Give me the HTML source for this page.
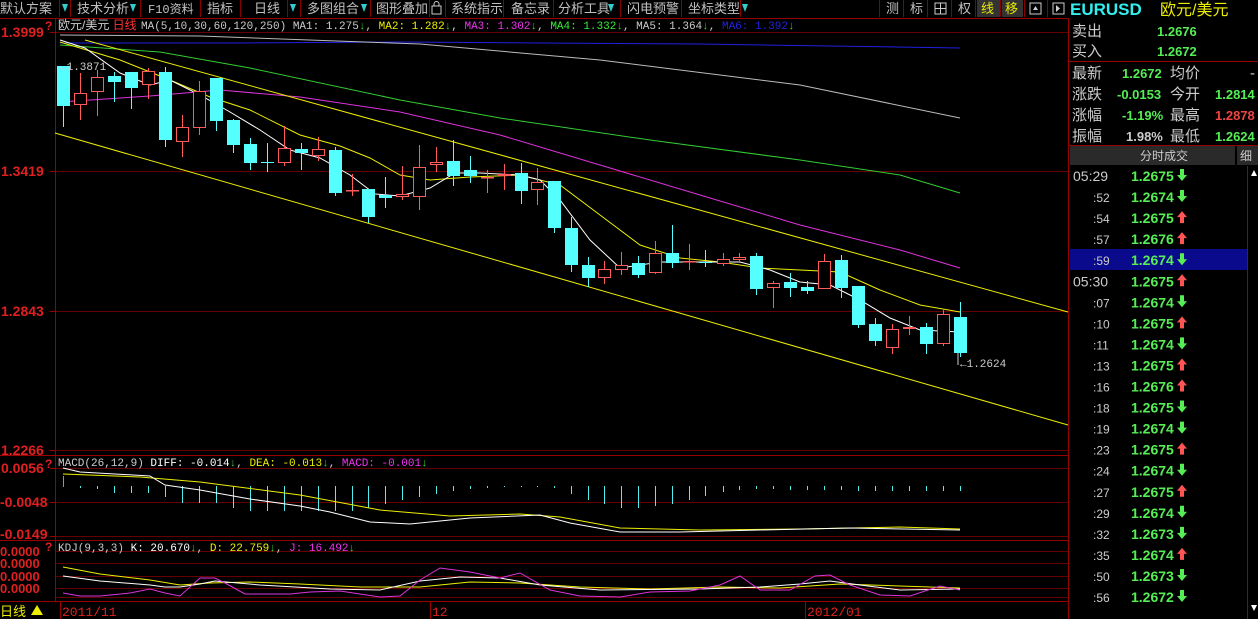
<!DOCTYPE html>
<html><head><meta charset="utf-8"><style>
html,body{margin:0;padding:0;background:#000;width:1258px;height:619px;overflow:hidden}
svg{display:block}
text{font-family:"Liberation Sans","Noto Sans CJK SC",sans-serif}
.m{font-family:"Liberation Mono","Noto Sans CJK SC",monospace}
</style></head><body>
<svg id="s" width="1258" height="619" xmlns="http://www.w3.org/2000/svg">
<rect width="1258" height="619" fill="#000"/>
<!-- toolbar -->
<g fill="#c0c0c0" font-size="13">
<text x="0" y="13">默认方案</text>
<text x="77" y="13">技术分析</text>
<text x="148" y="13" class="m" font-size="12">F10资料</text>
<text x="207" y="13">指标</text>
<text x="254" y="13">日线</text>
<text x="307" y="13">多图组合</text>
<text x="376" y="13">图形叠加</text>
<text x="451" y="13">系统指示</text>
<text x="511" y="13">备忘录</text>
<text x="558" y="13">分析工具</text>
<text x="627" y="13">闪电预警</text>
<text x="688" y="13">坐标类型</text>
<text x="886" y="13">测</text><text x="910" y="13">标</text><text x="958" y="13">权</text>
</g>
<rect x="977" y="0" width="23" height="17" fill="#333"/><rect x="1002" y="0" width="21" height="17" fill="#333"/>
<text x="981" y="13" font-size="13" fill="#e8e800">线</text><text x="1005" y="13" font-size="13" fill="#e8e800">移</text>
<rect x="935" y="3" width="11" height="11" fill="none" stroke="#ccc"/><path d="M940.5 3v11M935 8.5h11" stroke="#ccc"/>
<rect x="1030" y="3" width="11" height="11" fill="none" stroke="#ccc"/><path d="M1033 10l2.5-4 2.5 4z" fill="#ccc"/>
<rect x="1053" y="3" width="11" height="11" fill="none" stroke="#ccc"/><path d="M1056 5v7l4-3.5z" fill="#ccc"/>
<rect x="432" y="6" width="9" height="8" fill="none" stroke="#ccc"/><path d="M434 6v-2a2.5 2.5 0 0 1 5 0v2" fill="none" stroke="#ccc"/>
<g fill="#3cc">
<path d="M62 4h6l-3 8z"/><path d="M130 4h6l-3 8z"/><path d="M290 4h6l-3 8z"/><path d="M361 4h6l-3 8z"/><path d="M608 4h6l-3 8z"/><path d="M742 4h6l-3 8z"/>
</g>
<g stroke="#800" stroke-width="1">
<path d="M59.5 0v17M70.5 0v17M140.5 0v17M200.5 0v17M240.5 0v17M287.5 0v17M300.5 0v17M370.5 0v17M429.5 0v17M445.5 0v17M503.5 0v17M553.5 0v17M620.5 0v17M681.5 0v17M740.5 0v17M879.5 0v17M903.5 0v17M927.5 0v17M951.5 0v17M975.5 0v17M1000.5 0v17M1024.5 0v17M1047.5 0v17"/>
</g>
<text x="1070" y="15" font-size="17" font-weight="bold" fill="#3ee" font-family="Liberation Serif,serif">EURUSD</text>
<text x="1160" y="15" font-size="16" fill="#ee0">欧元/美元</text>
<!-- frame lines -->
<g stroke="#900" fill="none">
<path d="M0 18.5h1068M55.5 18v583M1068.5 18v601M0 455.5h1068M0 540.5h1068M0 601.5h1068"/>
<path d="M56 32.5h1012M56 171.5h1012M56 311.5h1012M56 450.5h1012" stroke="#600"/>
<path d="M56 468.5h1012M56 502.5h1012M56 536.5h1012" stroke="#600"/>
<path d="M56 551.5h1012M56 563.5h1012M56 576.5h1012M56 588.5h1012M56 597.5h1012" stroke="#600"/>
<path d="M50 32.5h5M50 171.5h5M50 311.5h5M50 450.5h5M50 468.5h5M50 502.5h5M50 536.5h5"/>
</g>
<!-- axis labels -->
<g fill="#e02020" font-size="14" class="m" font-weight="bold">
<text x="1" y="37">1.3999</text><text x="1" y="176">1.3419</text><text x="1" y="316">1.2843</text><text x="1" y="455">1.2266</text>
<text x="1" y="473">0.0056</text><text x="0" y="507">-0.0048</text><text x="0" y="539">-0.0149</text>
<text x="0" y="556" font-size="13">0.0000</text><text x="0" y="568" font-size="13">0.0000</text><text x="0" y="581" font-size="13">0.0000</text><text x="0" y="593" font-size="13">0.0000</text>
</g>
<text x="45" y="30" fill="#e02020" font-size="12" font-weight="bold">?</text>
<text x="45" y="468" fill="#e02020" font-size="12" font-weight="bold">?</text>
<text x="45" y="551" fill="#e02020" font-size="12" font-weight="bold">?</text>
<!-- header line -->
<text x="58" y="29" font-size="12" fill="#ccc">欧元/美元 <tspan fill="#f33">日线</tspan></text>
<text x="141" y="29" font-size="11" class="m" fill="#ccc" xml:space="preserve">MA(5,10,30,60,120,250) MA1: 1.275<tspan fill="#3c3">↓</tspan>, <tspan fill="#ee0">MA2: 1.282</tspan><tspan fill="#3c3">↓</tspan>, <tspan fill="#e3e">MA3: 1.302</tspan><tspan fill="#3c3">↓</tspan>, <tspan fill="#3e3">MA4: 1.332</tspan><tspan fill="#3c3">↓</tspan>, MA5: 1.364<tspan fill="#3c3">↓</tspan>, <tspan fill="#22d">MA6: 1.392</tspan><tspan fill="#3c3">↓</tspan></text>
<!-- MA lines -->
<g fill="none" stroke-width="1">
<polyline stroke="#2020e0" points="60,43 230,43 400,42 700,44 960,48"/>
<polyline stroke="#bbb" points="60,35 200,36 420,44 600,60 800,85 960,118"/>
<polyline stroke="#3c3" points="60,45 160,52 250,68 400,100 500,118 650,140 800,160 900,175 960,193"/>
<polyline stroke="#d3d" points="60,102 150,96 220,90 300,97 400,112 500,135 600,165 700,195 800,225 900,250 960,268"/>
<polyline stroke="#ee0" points="60,42 120,60 170,80 210,97 250,110 300,135 340,146 370,158 400,175 430,180 470,177 520,175 560,185 600,215 640,245 680,258 720,262 760,268 800,270 840,272 880,290 920,305 960,312"/>
<polyline stroke="#fff" points="60,40 85,48 120,73 150,85 170,80 200,95 230,112 260,130 290,150 320,158 350,175 375,194 400,196 430,188 455,173 480,173 520,175 540,180 560,200 590,240 620,268 660,262 700,262 740,262 770,270 800,282 830,285 860,300 890,318 920,330 960,332"/>
<path stroke="#ee0" d="M85 40L1068 312M55 133L1068 425"/>
</g>
<g id="candles"></g>
<text x="60" y="70" font-size="11" class="m" fill="#ccc">←1.3871</text>
<text x="960" y="367" font-size="11" class="m" fill="#ccc">←1.2624</text>
<path d="M958 353v12" stroke="#ccc"/>
<!-- MACD -->
<text x="58" y="466" font-size="11" class="m" fill="#ccc" xml:space="preserve">MACD(26,12,9) <tspan fill="#fff">DIFF: -0.014</tspan><tspan fill="#3c3">↓</tspan>, <tspan fill="#ee0">DEA: -0.013</tspan><tspan fill="#3c3">↓</tspan>, <tspan fill="#e3e">MACD: -0.001</tspan><tspan fill="#3c3">↓</tspan></text>
<g id="macd" stroke="#5ee"></g>
<polyline fill="none" stroke="#ee0" points="63,474 140,477 200,482 300,495 380,510 450,516 520,514 560,517 620,528 700,530 800,529 900,527 960,529"/>
<polyline fill="none" stroke="#fff" points="63,468 80,472 150,476 165,485 200,490 250,499 300,506 330,512 370,522 410,524 470,518 540,515 570,523 620,532 680,532 760,530 850,528 960,530"/>
<!-- KDJ -->
<text x="58" y="551" font-size="11" class="m" fill="#ccc" xml:space="preserve">KDJ(9,3,3) <tspan fill="#fff">K: 20.670</tspan><tspan fill="#3c3">↓</tspan>, <tspan fill="#ee0">D: 22.759</tspan><tspan fill="#3c3">↓</tspan>, <tspan fill="#e3e">J: 16.492</tspan><tspan fill="#3c3">↓</tspan></text>
<polyline fill="none" stroke="#ee0" points="63,567 100,574 150,580 180,585 210,583 250,582 300,584 360,587 420,587 470,582 520,583 580,587 650,589 720,587 780,588 840,584 900,586 960,588"/>
<polyline fill="none" stroke="#fff" points="63,576 100,581 150,585 165,587 180,587 200,584 215,581 260,585 330,589 380,590 420,581 460,577 500,578 540,585 600,590 700,589 760,587 800,584 830,581 860,585 900,590 960,589"/>
<polyline fill="none" stroke="#d3d" points="63,593 80,596 100,596 130,593 150,589 165,593 180,596 200,578 215,578 225,583 245,594 290,594 310,592 340,591 380,597 400,596 420,580 440,568 470,572 500,578 520,573 550,590 580,596 620,597 650,592 690,591 720,585 740,576 760,590 790,590 815,576 830,575 850,585 880,595 910,596 940,586 960,590"/>
<!-- bottom -->
<text x="0" y="616" font-size="13" fill="#ee0">日线</text>
<path d="M31 615l6-10 6 10z" fill="#ee0"/>
<text x="62" y="616" font-size="13" class="m" fill="#e02020">2011/11</text>
<text x="432" y="616" font-size="13" class="m" fill="#e02020">12</text>
<text x="807" y="616" font-size="13" class="m" fill="#e02020">2012/01</text>
<path d="M60.5 602v17M430.5 602v17M805.5 602v17" stroke="#900"/>
<!-- right panel -->
<g font-size="15">
<text x="1072" y="36" fill="#ccc">卖出</text><text x="1157" y="36" fill="#5e5" font-size="13" font-weight="bold">1.2676</text>
<text x="1072" y="56" fill="#ccc">买入</text><text x="1157" y="56" fill="#5e5" font-size="13" font-weight="bold">1.2672</text>
<text x="1072" y="78" fill="#ccc">最新</text><text x="1122" y="78" fill="#5e5" font-size="13" font-weight="bold">1.2672</text><text x="1170" y="78" fill="#ccc">均价</text><text x="1250" y="78" fill="#ccc">-</text>
<text x="1072" y="99" fill="#ccc">涨跌</text><text x="1117" y="99" fill="#5e5" font-size="13" font-weight="bold">-0.0153</text><text x="1170" y="99" fill="#ccc">今开</text><text x="1215" y="99" fill="#5e5" font-size="13" font-weight="bold">1.2814</text>
<text x="1072" y="120" fill="#ccc">涨幅</text><text x="1122" y="120" fill="#5e5" font-size="13" font-weight="bold">-1.19%</text><text x="1170" y="120" fill="#ccc">最高</text><text x="1215" y="120" fill="#e44" font-size="13" font-weight="bold">1.2878</text>
<text x="1072" y="141" fill="#ccc">振幅</text><text x="1126" y="141" fill="#ccc" font-size="13" font-weight="bold">1.98%</text><text x="1170" y="141" fill="#ccc">最低</text><text x="1215" y="141" fill="#5e5" font-size="13" font-weight="bold">1.2624</text>
</g>
<path d="M1068 61.5h190M1068 145.5h190" stroke="#900"/>
<rect x="1070" y="146" width="165" height="19" fill="#2a2a2a"/><rect x="1237" y="146" width="21" height="19" fill="#2a2a2a"/>
<text x="1140" y="160" font-size="12" fill="#ccc">分时成交</text><text x="1240" y="160" font-size="12" fill="#ccc">细</text>
<path d="M1247.5 166v453" stroke="#900"/>
<path d="M1251 176l3-6 3 6z" fill="#fff"/><path d="M1251 605l3 6 3-6z" fill="#fff"/>
<rect x="1070" y="249" width="177" height="21" fill="#0a0a8c"/>
<g id="ticks" font-size="13"></g>
</svg>
<script>
var NS="http://www.w3.org/2000/svg";
function el(p,t,a){var e=document.createElementNS(NS,t);for(var k in a)e.setAttribute(k,a[k]);p.appendChild(e);return e;}
var C=[[63,'c',66,106,66,127],[80,'r',93,105,73,120],[97,'r',77,92,70,116],[114,'c',76,82,72,102],[131,'c',72,88,72,109],[148,'r',71,85,68,99],[165,'c',72,140,67,147],[182,'r',127,142,115,157],[199,'r',91,128,81,135],[216,'c',78,121,78,131],[233,'c',120,145,119,153],[250,'c',144,163,138,170],[267,'c',162,162,143,172],[284,'r',148,163,126,166],[301,'c',149,153,143,170],[318,'r',149,156,137,161],[335,'c',150,193,147,196],[352,'r',190,190,174,196],[368,'c',189,217,189,223],[385,'c',195,198,177,208],[402,'r',194,197,166,200],[419,'r',167,197,145,210],[436,'r',162,165,147,172],[453,'c',161,176,140,186],[470,'c',170,176,156,183],[487,'r',177,177,170,193],[504,'r',174,176,164,190],[521,'c',173,191,163,204],[537,'r',182,190,168,205],[554,'c',181,228,181,233],[571,'c',228,265,217,272],[588,'c',265,278,257,287],[604,'r',269,278,261,284],[621,'r',265,270,252,275],[638,'c',263,275,256,278],[655,'r',253,273,241,274],[672,'c',253,263,225,268],[689,'r',261,261,244,270],[705,'c',262,262,250,267],[723,'r',259,264,253,266],[739,'r',257,260,253,262],[756,'c',256,289,253,295],[773,'r',283,288,281,308],[790,'c',282,288,273,297],[807,'c',287,291,281,294],[824,'r',261,289,254,289],[841,'c',260,288,255,298],[858,'c',286,325,286,328],[875,'c',324,341,318,346],[892,'r',329,348,324,354],[909,'r',327,329,316,335],[926,'c',327,344,323,354],[943,'r',314,344,310,346],[960,'c',317,353,302,357]];
var g=document.getElementById('candles');
C.forEach(function(c){var x=c[0],col=c[1]=='c'?'#55ffff':'#ff5b5b';
el(g,'line',{x1:x+.5,x2:x+.5,y1:c[4],y2:c[5],stroke:col});
var h=Math.max(1,c[3]-c[2]);
if(c[1]=='c')el(g,'rect',{x:x-6,y:c[2],width:13,height:h,fill:col});
else el(g,'rect',{x:x-5.5,y:c[2]+.5,width:12,height:Math.max(0.5,h-1),fill:'#000',stroke:col});});
var m=document.getElementById('macd');
var L=[11,2,3,7,7,7,11,17,17,17,22,25,25,25,25,25,25,25,22,18,14,11,8,5,3,2,1,1,1,2,8,14,18,22,22,20,18,14,10,6,4,3,3,4,4,4,4,5,5,5,5,5,5,5];
C.forEach(function(c,i){var y0=i==0?476:486;el(m,'line',{x1:c[0]+.5,x2:c[0]+.5,y1:y0,y2:y0+L[i],stroke:i==0?'#f66':'#5ee'});});
var T=[['05:29','1.2675',0],[':52','1.2674',0],[':54','1.2675',1],[':57','1.2676',1],[':59','1.2674',0],['05:30','1.2675',1],[':07','1.2674',0],[':10','1.2675',1],[':11','1.2674',0],[':13','1.2675',1],[':16','1.2676',1],[':18','1.2675',0],[':19','1.2674',0],[':23','1.2675',1],[':24','1.2674',0],[':27','1.2675',1],[':29','1.2674',0],[':32','1.2673',0],[':35','1.2674',1],[':50','1.2673',0],[':56','1.2672',0]];
var tg=document.getElementById('ticks');
T.forEach(function(t,i){var y=181+i*21.05;var full=t[0].length>3;
var a=el(tg,'text',{x:full?1073:1093,y:y,fill:'#ccc','font-size':full?14:12});a.textContent=t[0];
var b=el(tg,'text',{x:1131,y:y,fill:'#5e5','font-weight':'bold','font-size':14});b.textContent=t[1];
var col=t[2]?'#f55':'#5e5',ax=1182,ay=y-5;
if(t[2])el(tg,'path',{d:'M'+(ax-5)+' '+(ay-1)+'l5-6 5 6h-3v6h-4v-6z',fill:col});
else el(tg,'path',{d:'M'+(ax-5)+' '+(ay-1)+'l5 6 5-6h-3v-6h-4v6z',fill:col});});
</script>
</body></html>
